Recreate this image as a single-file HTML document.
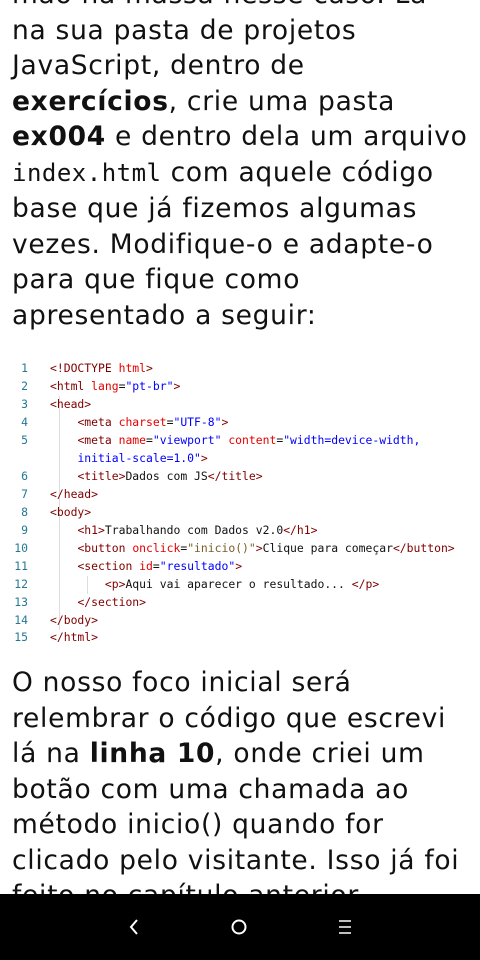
<!DOCTYPE html>
<html><head><meta charset="utf-8"><style>
body{margin:0;width:480px;height:960px;overflow:hidden;background:#fff;position:relative;font-family:"DejaVu Sans","Liberation Sans",sans-serif;color:#111}
.p{position:absolute;left:12px;width:470px;font-size:26.5px;letter-spacing:0.7px;line-height:35.5px;margin:0;white-space:nowrap}
.m{font-family:"DejaVu Sans Mono","Liberation Mono",monospace;font-size:24px;letter-spacing:0.5px}
.code{position:absolute;left:0;top:359px;width:480px;font-family:"DejaVu Sans Mono","Liberation Mono",monospace;font-size:11.4px;line-height:18px}
.l{position:relative;height:18px;white-space:pre}
.n{position:absolute;left:0;width:28px;text-align:right;color:#237893}
.c{position:absolute;left:50px}
.t{color:#800000}.a{color:#e50000}.s{color:#0000ff}.f{color:#795e26}
.g1{position:absolute;left:59px;top:396px;height:234px;border-left:1px solid #ddd}
.g2{position:absolute;left:87px;top:576px;height:18px;border-left:1px solid #ddd}
.nav{position:absolute;left:0;top:894px;width:480px;height:66px;background:#000}
</style></head><body>
<p class="p" style="top:-23px">mão na massa nesse caso. Lá<br>na sua pasta de projetos<br>JavaScript, dentro de<br><b>exercícios</b>, crie uma pasta<br><b>ex004</b> e dentro dela um arquivo<br><span class="m">index.html</span> com aquele código<br>base que já fizemos algumas<br>vezes. Modifique-o e adapte-o<br>para que fique como<br>apresentado a seguir:</p>
<div class="g1"></div><div class="g2"></div>
<div class="code">
<div class="l"><span class="n">1</span><span class="c"><span class="t">&lt;!DOCTYPE</span> <span class="a">html</span><span class="t">&gt;</span></span></div>
<div class="l"><span class="n">2</span><span class="c"><span class="t">&lt;html</span> <span class="a">lang</span>=<span class="s">"pt-br"</span><span class="t">&gt;</span></span></div>
<div class="l"><span class="n">3</span><span class="c"><span class="t">&lt;head&gt;</span></span></div>
<div class="l"><span class="n">4</span><span class="c">    <span class="t">&lt;meta</span> <span class="a">charset</span>=<span class="s">"UTF-8"</span><span class="t">&gt;</span></span></div>
<div class="l"><span class="n">5</span><span class="c">    <span class="t">&lt;meta</span> <span class="a">name</span>=<span class="s">"viewport"</span> <span class="a">content</span>=<span class="s">"width=device-width,</span></span></div>
<div class="l"><span class="c">    <span class="s">initial-scale=1.0"</span><span class="t">&gt;</span></span></div>
<div class="l"><span class="n">6</span><span class="c">    <span class="t">&lt;title&gt;</span>Dados com JS<span class="t">&lt;/title&gt;</span></span></div>
<div class="l"><span class="n">7</span><span class="c"><span class="t">&lt;/head&gt;</span></span></div>
<div class="l"><span class="n">8</span><span class="c"><span class="t">&lt;body&gt;</span></span></div>
<div class="l"><span class="n">9</span><span class="c">    <span class="t">&lt;h1&gt;</span>Trabalhando com Dados v2.0<span class="t">&lt;/h1&gt;</span></span></div>
<div class="l"><span class="n">10</span><span class="c">    <span class="t">&lt;button</span> <span class="a">onclick</span>=<span class="f">"inicio()"</span><span class="t">&gt;</span>Clique para começar<span class="t">&lt;/button&gt;</span></span></div>
<div class="l"><span class="n">11</span><span class="c">    <span class="t">&lt;section</span> <span class="a">id</span>=<span class="s">"resultado"</span><span class="t">&gt;</span></span></div>
<div class="l"><span class="n">12</span><span class="c">        <span class="t">&lt;p&gt;</span>Aqui vai aparecer o resultado... <span class="t">&lt;/p&gt;</span></span></div>
<div class="l"><span class="n">13</span><span class="c">    <span class="t">&lt;/section&gt;</span></span></div>
<div class="l" style="height:17px"><span class="n">14</span><span class="c"><span class="t">&lt;/body&gt;</span></span></div>
<div class="l" style="height:17px"><span class="n">15</span><span class="c"><span class="t">&lt;/html&gt;</span></span></div>
</div>
<p class="p" style="top:665px">O nosso foco inicial será<br>relembrar o código que escrevi<br>lá na <b>linha 10</b>, onde criei um<br>botão com uma chamada ao<br>método inicio() quando for<br>clicado pelo visitante. Isso já foi<br>feito no capítulo anterior</p>
<div class="nav">
<svg width="480" height="66" style="position:absolute;left:0;top:0">
<path d="M137 26 L131 33 L137 40" stroke="#fff" stroke-width="2" fill="none"/>
<circle cx="239" cy="33" r="6.5" stroke="#fff" stroke-width="2" fill="none"/>
<path d="M339 27H351M339 33H351M339 39H351" stroke="#fff" stroke-width="1.6"/>
</svg>
</div>
</body></html>
